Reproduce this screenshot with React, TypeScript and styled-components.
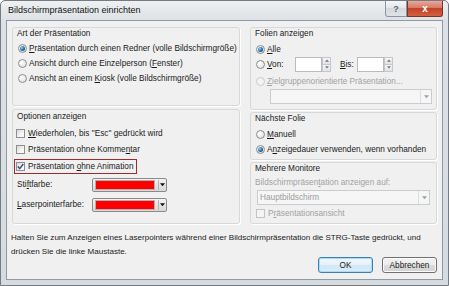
import * as React from 'react';
import styled, { createGlobalStyle } from 'styled-components';

const GlobalStyle = createGlobalStyle`
  html, body {
    margin: 0;
    padding: 0;
    background: #ffffff;
  }
  body {
    font-family: 'Liberation Sans', Arial, sans-serif;
    font-size: 8.25px;
    color: #1b1b1b;
  }
`;

const Window = styled.div`
  width: 449px;
  height: 286px;
  box-sizing: border-box;
  border: 1px solid #737b84;
  border-radius: 5px 5px 0 0;
  background: linear-gradient(#eef0f2, #dde1e5 20px, #d6dbe0);
  display: flex;
  flex-direction: column;
  overflow: hidden;
`;

const TitleBar = styled.div`
  height: 19px;
  flex: none;
  display: flex;
  justify-content: space-between;
  align-items: flex-start;
  padding: 0 5px 0 7px;
`;

const Title = styled.span`
  font-size: 9px;
  line-height: 19px;
  color: #111;
`;

const Caption = styled.div`
  display: flex;
`;

const CaptionButton = styled.div<{ $close?: boolean }>`
  width: ${p => (p.$close ? 36 : 22)}px;
  height: 16px;
  box-sizing: border-box;
  border: 1px solid ${p => (p.$close ? '#7c3224' : '#8a96a2')};
  border-top: none;
  border-radius: ${p => (p.$close ? '0 0 3px 0' : '0 0 0 3px')};
  background: ${p =>
    p.$close
      ? 'linear-gradient(#e9a99a, #d67a64 45%, #c2422b 50%, #d4603f)'
      : 'linear-gradient(#f4f6f8, #e3e7eb 45%, #d2d8de 50%, #dfe4e9)'};
  display: flex;
  align-items: center;
  justify-content: center;
  color: ${p => (p.$close ? '#ffffff' : '#5b6570')};
  font-weight: bold;
  font-size: ${p => (p.$close ? 10 : 9)}px;
`;

const Client = styled.div`
  flex: 1;
  margin: 0 5px 5px 5px;
  background: #f0f0f0;
  border: 1px solid #8f9aa6;
  padding: 6px 5px 0 5px;
  display: flex;
  flex-direction: column;
`;

const Columns = styled.div`
  display: grid;
  grid-template-columns: 228px 187px;
  column-gap: 10px;
`;

const Column = styled.div<{ $gap: number }>`
  display: flex;
  flex-direction: column;
  gap: ${p => p.$gap}px;
`;

const Group = styled.div<{ $h: number }>`
  height: ${p => p.$h}px;
  box-sizing: border-box;
  border: 1px solid #d6d9dc;
  border-radius: 3px;
  box-shadow: 1px 1px 0 #ffffff;
  padding: 0 4px;
  display: flex;
  flex-direction: column;
`;

const GroupLabel = styled.div<{ $top?: number }>`
  line-height: 11px;
  margin-top: ${p => p.$top ?? 0}px;
  margin-bottom: 2px;
`;

const OptionRow = styled.div<{ $h?: number; $disabled?: boolean }>`
  height: ${p => p.$h ?? 15}px;
  display: flex;
  align-items: center;
  padding-left: 1px;
  gap: 2px;
  color: ${p => (p.$disabled ? '#a2a2a2' : 'inherit')};
  white-space: nowrap;
`;

const Radio = styled.span<{ $checked?: boolean; $disabled?: boolean }>`
  width: 9px;
  height: 9px;
  flex: none;
  box-sizing: border-box;
  border-radius: 50%;
  border: 1px solid ${p => (p.$disabled ? '#c9c9c9' : '#8d8d8d')};
  background: ${p =>
    p.$disabled ? '#f3f3f3' : 'radial-gradient(circle at 35% 35%, #ffffff, #e6e6e6 65%, #cdcdcd)'};
  display: flex;
  align-items: center;
  justify-content: center;
  &::after {
    content: '';
    display: ${p => (p.$checked ? 'block' : 'none')};
    width: 5px;
    height: 5px;
    border-radius: 50%;
    background: radial-gradient(circle at 35% 35%, #8fd0f6, #2369a8 55%, #0f3f70);
  }
`;

const CheckRow = styled.div<{ $h?: number; $disabled?: boolean }>`
  height: ${p => p.$h ?? 16.5}px;
  display: flex;
  align-items: center;
  color: ${p => (p.$disabled ? '#a2a2a2' : 'inherit')};
`;

const CheckLabel = styled.span<{ $marked?: boolean }>`
  display: inline-flex;
  align-items: center;
  gap: 3px;
  height: 13px;
  margin-left: -3px;
  padding: 0 2px 0 1px;
  border: 1px solid ${p => (p.$marked ? '#9c2b2b' : 'transparent')};
  white-space: nowrap;
`;

const CheckBox = styled.span<{ $disabled?: boolean }>`
  width: 9px;
  height: 9px;
  flex: none;
  box-sizing: border-box;
  border: 1px solid ${p => (p.$disabled ? '#c3c3c3' : '#8e8e8e')};
  background: ${p => (p.$disabled ? '#f4f4f4' : 'linear-gradient(135deg, #d9d9d9, #f9f9f9 70%)')};
  display: flex;
  align-items: center;
  justify-content: center;
`;

const Key = styled.span`
  text-decoration: underline;
  text-underline-offset: 1px;
`;

const FieldLabel = styled.span<{ $w: number; $ml?: number }>`
  width: ${p => p.$w}px;
  margin-left: ${p => p.$ml ?? 0}px;
  flex: none;
`;

const SpinField = styled.div`
  display: flex;
  height: 15px;
  margin-left: 2px;
`;

const SpinInput = styled.div`
  width: 27px;
  box-sizing: border-box;
  border: 1px solid #b7bcc2;
  background: #ffffff;
`;

const SpinButtons = styled.div`
  width: 9px;
  display: flex;
  flex-direction: column;
`;

const SpinHalf = styled.div`
  flex: 1;
  box-sizing: border-box;
  border: 1px solid #c4c8cc;
  background: linear-gradient(#f6f6f6, #e2e2e2);
  display: flex;
  align-items: center;
  justify-content: center;
  &:first-child {
    border-bottom: none;
  }
`;

const Combo = styled.div<{ $ml: number; $mr: number }>`
  height: 15px;
  box-sizing: border-box;
  margin: 1px ${p => p.$mr}px 0 ${p => p.$ml}px;
  border: 1px solid #c8cdd2;
  background: #f6f6f6;
  display: flex;
  color: #9c9c9c;
`;

const ComboText = styled.div`
  flex: 1;
  line-height: 13px;
  padding-left: 2px;
`;

const ComboArrow = styled.div`
  width: 10px;
  border-left: 1px solid #dcdfe2;
  display: flex;
  align-items: center;
  justify-content: center;
`;

const DisabledNote = styled.div`
  line-height: 12px;
  color: #a2a2a2;
  margin-top: 1px;
`;

const ColorRow = styled.div<{ $top: number }>`
  display: flex;
  align-items: center;
  height: 14px;
  margin-top: ${p => p.$top}px;
`;

const ColorButton = styled.div`
  width: 75px;
  height: 14px;
  box-sizing: border-box;
  border: 1px solid #8a8a8a;
  border-radius: 2px;
  background: linear-gradient(#f4f4f4, #e4e4e4 50%, #d8d8d8);
  display: flex;
  align-items: center;
  padding: 1px;
`;

const Swatch = styled.div<{ $color: string }>`
  width: 60px;
  height: 10px;
  margin-left: 1px;
  background: ${p => p.$color};
  border: 1px solid #b0b0b0;
  box-sizing: border-box;
`;

const SwatchArrow = styled.div`
  flex: 1;
  display: flex;
  align-items: center;
  justify-content: center;
  align-self: stretch;
  margin-left: 3px;
  border-left: 1px solid #b5b5b5;
`;

const Footer = styled.div`
  height: 26px;
  margin-top: 7px;
  margin-left: -1px;
  font-size: 8.05px;
  line-height: 14px;
  white-space: nowrap;
`;

const ButtonRow = styled.div`
  display: flex;
  justify-content: flex-end;
  gap: 9px;
`;

const Button = styled.div<{ $default?: boolean }>`
  width: 55px;
  height: 16px;
  box-sizing: border-box;
  border: 1px solid ${p => (p.$default ? '#3c7fb1' : '#707070')};
  border-radius: 3px;
  background: ${p =>
    p.$default
      ? 'linear-gradient(#f2f8fc, #e6f1f9 50%, #d3e6f4 51%, #dcecf7)'
      : 'linear-gradient(#f3f3f3, #ebebeb 50%, #dddddd 51%, #d2d2d2)'};
  box-shadow: inset 0 0 0 1px ${p => (p.$default ? '#a8dcf8' : '#fbfbfb')};
  display: flex;
  align-items: center;
  justify-content: center;
`;

const DownArrow: React.FC<{ color?: string; w?: number }> = ({ color = '#7a7a7a', w = 5 }) => (
  <svg width={w} height={Math.ceil(w / 2) + 1} viewBox="0 0 6 4">
    <path d="M0 0 L6 0 L3 3.5 Z" fill={color} />
  </svg>
);

const SpinArrow: React.FC<{ up?: boolean }> = ({ up }) => (
  <svg width={4} height={3} viewBox="0 0 6 4">
    <path d={up ? 'M0 4 L6 4 L3 0.5 Z' : 'M0 0 L6 0 L3 3.5 Z'} fill="#6b7580" />
  </svg>
);

const Tick: React.FC = () => (
  <svg width={7} height={7} viewBox="0 0 7 7">
    <path d="M0.8 3.6 L2.7 5.6 L6.3 1" stroke="#34507e" strokeWidth={1.4} fill="none" />
  </svg>
);

const Spin: React.FC = () => (
  <SpinField>
    <SpinInput />
    <SpinButtons>
      <SpinHalf>
        <SpinArrow up />
      </SpinHalf>
      <SpinHalf>
        <SpinArrow />
      </SpinHalf>
    </SpinButtons>
  </SpinField>
);

const ColorPicker: React.FC<{ color: string }> = ({ color }) => (
  <ColorButton>
    <Swatch $color={color} />
    <SwatchArrow>
      <DownArrow color="#111" w={5} />
    </SwatchArrow>
  </ColorButton>
);

export default function App() {
  return (
    <>
      <GlobalStyle />
      <Window>
        <TitleBar>
          <Title>Bildschirmpräsentation einrichten</Title>
          <Caption>
            <CaptionButton>?</CaptionButton>
            <CaptionButton $close>x</CaptionButton>
          </Caption>
        </TitleBar>
        <Client>
          <Columns>
            <Column $gap={3}>
              <Group $h={79}>
                <GroupLabel $top={0}>Art der Präsentation</GroupLabel>
                <OptionRow>
                  <Radio $checked />
                  <span>
                    <Key>P</Key>räsentation durch einen Redner (volle Bildschirmgröße)
                  </span>
                </OptionRow>
                <OptionRow>
                  <Radio />
                  <span>
                    Ansicht durch eine Einzelperson (<Key>F</Key>enster)
                  </span>
                </OptionRow>
                <OptionRow>
                  <Radio />
                  <span>
                    Ansicht an einem <Key>K</Key>iosk (volle Bildschirmgröße)
                  </span>
                </OptionRow>
              </Group>
              <Group $h={115}>
                <GroupLabel $top={1}>Optionen anzeigen</GroupLabel>
                <CheckRow style={{ marginTop: 1 }}>
                  <CheckLabel>
                    <CheckBox />
                    <span>
                      <Key>W</Key>iederholen, bis "Esc" gedrückt wird
                    </span>
                  </CheckLabel>
                </CheckRow>
                <CheckRow>
                  <CheckLabel>
                    <CheckBox />
                    <span>
                      Präsentation ohne Komme<Key>n</Key>tar
                    </span>
                  </CheckLabel>
                </CheckRow>
                <CheckRow>
                  <CheckLabel $marked>
                    <CheckBox>
                      <Tick />
                    </CheckBox>
                    <span>
                      Präsentation <Key>o</Key>hne Animation
                    </span>
                  </CheckLabel>
                </CheckRow>
                <ColorRow $top={3}>
                  <FieldLabel $w={75}>
                    Sti<Key>f</Key>tfarbe:
                  </FieldLabel>
                  <ColorPicker color="#ff0000" />
                </ColorRow>
                <ColorRow $top={6}>
                  <FieldLabel $w={75}>
                    <Key>L</Key>aserpointerfarbe:
                  </FieldLabel>
                  <ColorPicker color="#ff0000" />
                </ColorRow>
              </Group>
            </Column>
            <Column $gap={2}>
              <Group $h={83}>
                <GroupLabel $top={0}>Folien anzeigen</GroupLabel>
                <OptionRow $h={14} style={{ marginTop: 1 }}>
                  <Radio $checked />
                  <span>
                    <Key>A</Key>lle
                  </span>
                </OptionRow>
                <OptionRow $h={16}>
                  <Radio />
                  <FieldLabel $w={24}>
                    <Key>V</Key>on:
                  </FieldLabel>
                  <Spin />
                  <FieldLabel $w={13} $ml={7}>
                    <Key>B</Key>is:
                  </FieldLabel>
                  <Spin />
                </OptionRow>
                <OptionRow $h={14} $disabled style={{ marginTop: 2 }}>
                  <Radio $disabled />
                  <span>
                    <Key>Z</Key>ielgruppenorientierte Präsentation...
                  </span>
                </OptionRow>
                <Combo $ml={15} $mr={0}>
                  <ComboText />
                  <ComboArrow>
                    <DownArrow color="#a0a0a0" w={5} />
                  </ComboArrow>
                </Combo>
              </Group>
              <Group $h={48}>
                <GroupLabel $top={0}>Nächste Folie</GroupLabel>
                <OptionRow style={{ marginTop: 0.5 }}>
                  <Radio />
                  <span>
                    <Key>M</Key>anuell
                  </span>
                </OptionRow>
                <OptionRow>
                  <Radio $checked />
                  <span>
                    A<Key>n</Key>zeigedauer verwenden, wenn vorhanden
                  </span>
                </OptionRow>
              </Group>
              <Group $h={62}>
                <GroupLabel $top={0}>Mehrere Monitore</GroupLabel>
                <DisabledNote>
                  Bildschirmpräsen<Key>t</Key>ation anzeigen auf:
                </DisabledNote>
                <Combo $ml={2} $mr={2}>
                  <ComboText>Hauptbildschirm</ComboText>
                  <ComboArrow>
                    <DownArrow color="#a0a0a0" w={5} />
                  </ComboArrow>
                </Combo>
                <CheckRow $h={16} $disabled>
                  <CheckLabel style={{ marginLeft: -1 }}>
                    <CheckBox $disabled />
                    <span>
                      P<Key>r</Key>äsentationsansicht
                    </span>
                  </CheckLabel>
                </CheckRow>
              </Group>
            </Column>
          </Columns>
          <Footer>
            Halten Sie zum Anzeigen eines Laserpointers während einer Bildschirmpräsentation die STRG-Taste gedrückt, und
            <br />
            drücken Sie die linke Maustaste.
          </Footer>
          <ButtonRow>
            <Button $default>OK</Button>
            <Button>Abbrechen</Button>
          </ButtonRow>
        </Client>
      </Window>
    </>
  );
}
